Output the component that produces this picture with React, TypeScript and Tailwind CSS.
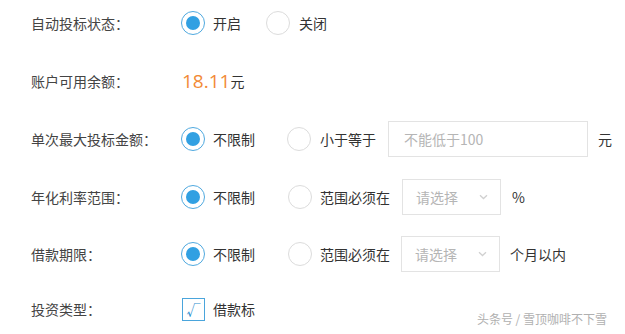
import React from "react";

const font = { fontFamily: '"Noto Sans CJK SC", "Noto Sans", sans-serif' };

function Radio({ checked, className = "" }: { checked?: boolean; className?: string }) {
  return checked ? (
    <div className={`flex h-[24px] w-[24px] shrink-0 items-center justify-center rounded-full border-[1.5px] border-[#4fa9df] bg-white ${className}`}>
      <div className="h-[14px] w-[14px] rounded-full bg-[#31a0e2]" />
    </div>
  ) : (
    <div className={`h-[24px] w-[24px] shrink-0 rounded-full border border-[#dcdcdc] bg-white ${className}`} />
  );
}

function Label({ children }: { children: React.ReactNode }) {
  return <div className="w-[181px] shrink-0 whitespace-nowrap pl-[31px] text-[14px] text-[#444]">{children}</div>;
}

function Select({ ml }: { ml: string }) {
  return (
    <div className={`flex h-[36px] w-[99px] shrink-0 items-center justify-between border border-[#e3e3e3] pl-[13px] pr-[12px] ${ml}`}>
      <span className="text-[14px] text-[#b5b5b5]">请选择</span>
      <svg width="9" height="6" viewBox="0 0 9 6">
        <path d="M1 1.2 L4.5 4.5 L8 1.2" fill="none" stroke="#d0d0d0" strokeWidth="1.3" />
      </svg>
    </div>
  );
}

export default function App() {
  return (
    <div className="relative h-[334px] w-[625px] overflow-hidden bg-white" style={font}>
      <div className="flex flex-col pt-[5px]">
        <div className="flex h-[36px] items-center">
          <Label>自动投标状态：</Label>
          <Radio checked />
          <span className="ml-[8px] text-[14px] text-[#333]">开启</span>
          <Radio className="ml-[25px]" />
          <span className="ml-[9px] text-[14px] text-[#333]">关闭</span>
        </div>
        <div className="mt-[22px] flex h-[36px] items-center">
          <Label>账户可用余额：</Label>
          <span className="ml-[1px] text-[19px] leading-none text-[#f28a36]" style={{ fontFamily: '"Open Sans", "Noto Sans", sans-serif' }}>18.11</span>
          <span className="text-[14px] text-[#333]">元</span>
        </div>
        <div className="mt-[22px] flex h-[36px] items-center">
          <Label>单次最大投标金额：</Label>
          <Radio checked />
          <span className="ml-[8px] text-[14px] text-[#333]">不限制</span>
          <Radio className="ml-[32px]" />
          <span className="ml-[9px] text-[14px] text-[#333]">小于等于</span>
          <div className="ml-[12px] flex h-[36px] w-[200px] shrink-0 items-center border border-[#e3e3e3] pl-[15px] text-[14px] text-[#b5b5b5]">
            不能低于100
          </div>
          <span className="ml-[10px] text-[14px] text-[#333]">元</span>
        </div>
        <div className="mt-[22px] flex h-[36px] items-center">
          <Label>年化利率范围：</Label>
          <Radio checked />
          <span className="ml-[8px] text-[14px] text-[#333]">不限制</span>
          <Radio className="ml-[33px]" />
          <span className="ml-[8px] text-[14px] text-[#333]">范围必须在</span>
          <Select ml="ml-[12px]" />
          <span className="ml-[11px] text-[14px] text-[#333]">%</span>
        </div>
        <div className="mt-[21px] flex h-[36px] items-center">
          <Label>借款期限：</Label>
          <Radio checked />
          <span className="ml-[8px] text-[14px] text-[#333]">不限制</span>
          <Radio className="ml-[33px]" />
          <span className="ml-[8px] text-[14px] text-[#333]">范围必须在</span>
          <Select ml="ml-[11px]" />
          <span className="ml-[10px] text-[14px] text-[#333]">个月以内</span>
        </div>
        <div className="mt-[19px] flex h-[36px] items-center">
          <Label>投资类型：</Label>
          <div className="ml-[1px] flex h-[23px] w-[23px] shrink-0 items-center justify-center border border-[#4aa5dc] text-[14px] text-[#2f8fcf]">√</div>
          <span className="ml-[8px] text-[14px] text-[#333]">借款标</span>
        </div>
      </div>
      <div className="absolute bottom-[6px] right-[18px] text-[12px] text-[#b0b0b0]">头条号 / 雪顶咖啡不下雪</div>
    </div>
  );
}
